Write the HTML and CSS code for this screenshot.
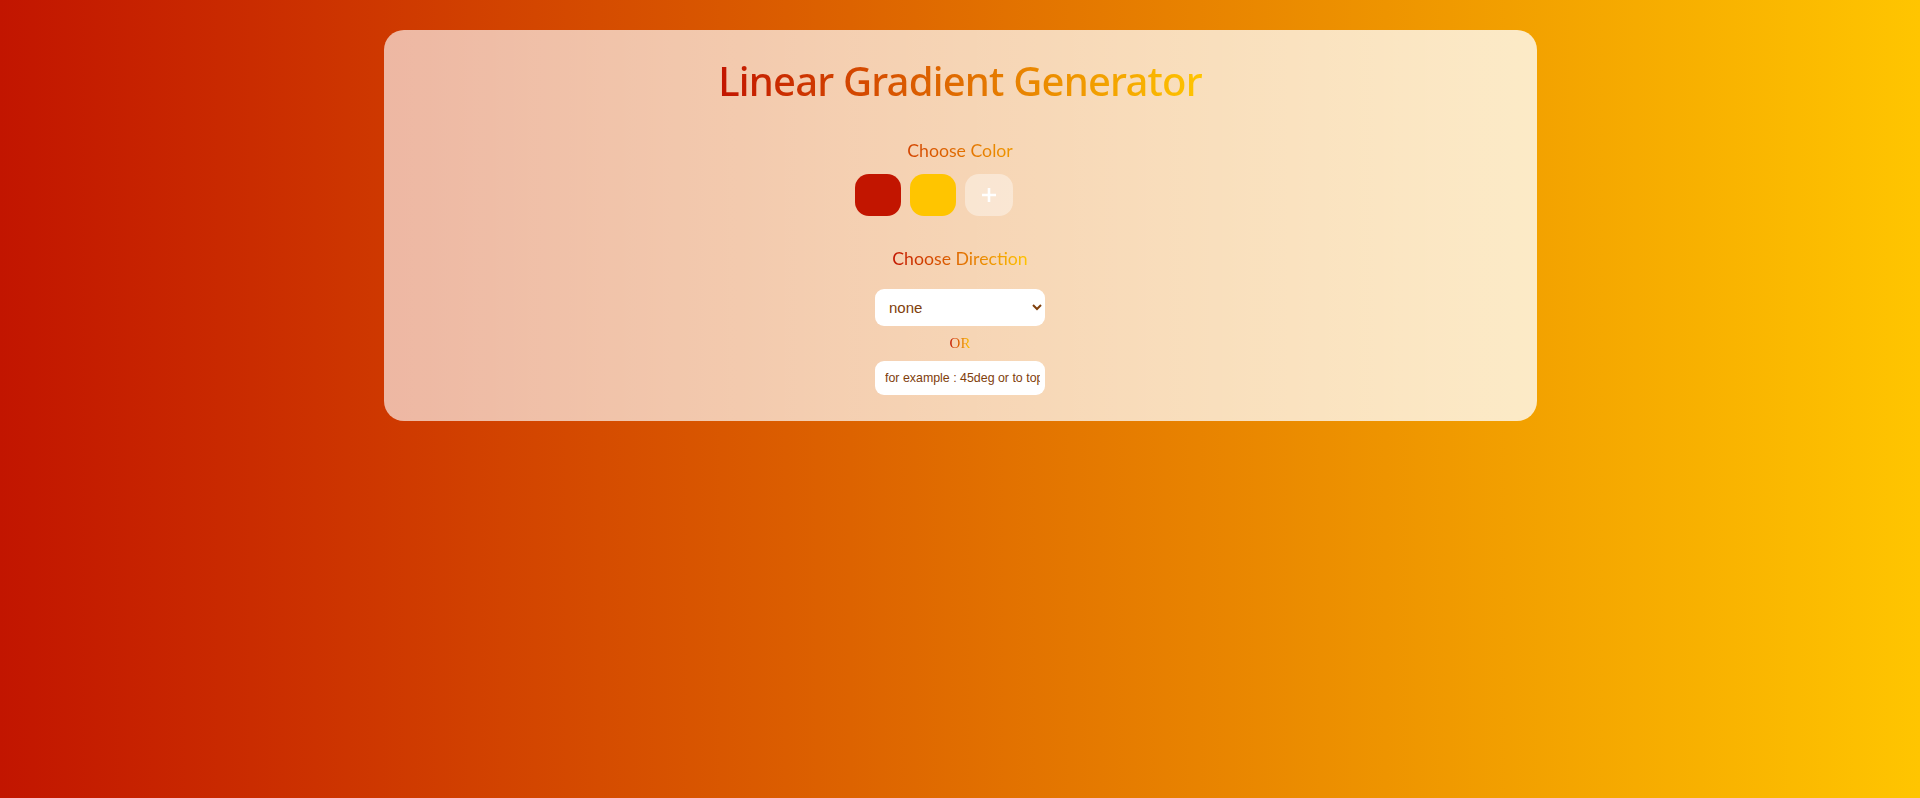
FILE: index.html
```html
<!DOCTYPE html>
<html lang="en">
<head>
<meta charset="utf-8">
<title>Linear Gradient Generator</title>
<link rel="stylesheet" href="styles.css">
</head>
<body>
  <main class="card">
    <h1 class="title"><span class="grad-text">Linear Gradient Generator</span></h1>

    <section class="colors">
      <h2 class="label label-wide"><span class="grad-text">Choose Color</span></h2>
      <div class="swatches">
        <button class="swatch swatch-red" aria-label="color 1"></button>
        <button class="swatch swatch-yellow" aria-label="color 2"></button>
        <button class="swatch swatch-add" aria-label="add color">
          <svg width="16" height="16" viewBox="0 0 16 16"><path d="M8 1v14M1 8h14" stroke="#fff" stroke-width="2.6" fill="none"/></svg>
        </button>
      </div>
    </section>

    <section class="direction">
      <h2 class="label"><span class="grad-text">Choose Direction</span></h2>
      <select class="field select">
        <option>none</option>
      </select>
      <p class="or"><span class="grad-text">OR</span></p>
      <input class="field input" type="text" placeholder="for example : 45deg or to top">
    </section>
  </main>
</body>
</html>
```
FILE: styles.css
```css
* { box-sizing: border-box; }

html, body {
  margin: 0;
  height: 100%;
}

body {
  background: linear-gradient(to right, #c21500, #ffc500);
  font-family: Lato, "Open Sans", "Liberation Sans", sans-serif;
  padding-top: 30px;
}

.card {
  width: 1153px;
  margin: 0 auto;
  height: 391px;
  border-radius: 20px;
  background: linear-gradient(to right, rgba(255,255,255,0.64), rgba(255,255,255,0.78));
  display: flex;
  flex-direction: column;
  align-items: center;
  padding-top: 23px;
}

.grad-text {
  background: linear-gradient(to right, #c21500, #ffc500);
  -webkit-background-clip: text;
  background-clip: text;
  color: transparent;
}

.title {
  margin: 0;
  font-family: "Noto Sans", "Open Sans", sans-serif;
  font-size: 40px;
  font-weight: 500;
  letter-spacing: -0.8px;
  line-height: 56px;
}

.colors {
  display: flex;
  flex-direction: column;
  align-items: center;
  margin-top: 30px;
}

.label {
  margin: 0;
  font-size: 17.7px;
  font-weight: 400;
  line-height: 24px;
  letter-spacing: 0;
  text-align: center;
}

.label-wide .grad-text {
  display: inline-block;
  padding: 0 59px;
}

.swatches {
  display: flex;
  gap: 9px;
  margin-top: 11px;
  margin-right: 52px;
}

.swatch {
  width: 46px;
  height: 42px;
  border: none;
  border-radius: 14px;
  padding: 0;
  display: flex;
  align-items: center;
  justify-content: center;
}

.swatch-red { background: #c21500; }
.swatch-yellow { background: #ffc500; }
.swatch-add {
  width: 48px;
  background: rgba(255,255,255,0.4);
}

.direction {
  display: flex;
  flex-direction: column;
  align-items: center;
  margin-top: 31px;
}

.field {
  width: 170px;
  border: none;
  background: #fff;
  color: #80400c;
  font-family: "Liberation Sans", Arial, sans-serif;
  outline: none;
}

.select {
  margin-top: 18px;
  height: 37px;
  border-radius: 9px;
  font-size: 15px;
  padding: 0 6px 0 10px;
}

.or {
  margin: 6px 0 0;
  font-family: "Liberation Serif", "Times New Roman", serif;
  font-size: 15px;
  line-height: 22px;
}

.input {
  margin-top: 7px;
  height: 34px;
  border-radius: 9px;
  font-size: 12.4px;
  padding: 0 5px 0 10px;
}

.input::placeholder {
  color: #80400c;
  opacity: 1;
}
```
